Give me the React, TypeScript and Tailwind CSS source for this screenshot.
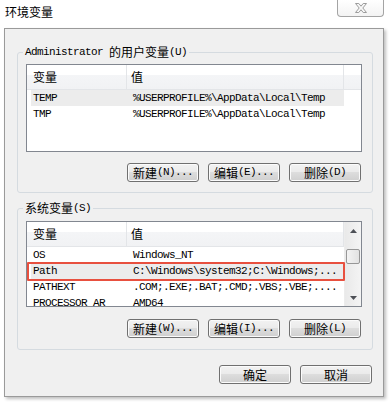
import React from "react";

const mono = "font-['Liberation_Mono'] text-[11px] tracking-[-0.6px] whitespace-pre";

function Btn({ children }: { children: React.ReactNode }) {
  return (
    <div className="w-[72px] h-[19px] rounded-[3px] border border-[#707070] bg-[linear-gradient(#f2f2f2_0%,#ebebeb_45%,#dddddd_50%,#cfcfcf_100%)] shadow-[inset_0_0_0_1px_#fbfbfb] flex items-center justify-center text-[12px] leading-none text-black">
      {children}
    </div>
  );
}

function Label({ cn, key1, tail = "..." }: { cn: string; key1: string; tail?: string }) {
  return (
    <span className="flex items-center">
      <span>{cn}</span>
      <span className={mono}>
        ({key1}){tail}
      </span>
    </span>
  );
}

function Header({ full }: { full: boolean }) {
  return (
    <div className="flex h-[25px] border-b border-[#e3e5e8] bg-[linear-gradient(#ffffff_0%,#ffffff_42%,#f4f5f7_42%,#f1f2f4_100%)]">
      <div className="w-[100px] border-r border-[#e3e5e8] pl-[6px] flex items-center text-[12px]">变量</div>
      <div className={full ? "w-[217px] border-r border-[#e3e5e8] pl-[4px] flex items-center text-[12px]" : "w-[217px] pl-[4px] flex items-center text-[12px]"}>
        值
      </div>
    </div>
  );
}

function Row({ name, value, selected, marked }: { name: string; value: string; selected?: boolean; marked?: boolean }) {
  return (
    <div className={selected ? "relative flex h-[16px] items-center ml-[4px] w-[313px] bg-[#ececec]" : "relative flex h-[16px] items-center ml-[4px] w-[313px]"}>
      <div className={`w-[96px] pl-[2px] ${mono}`}>{name}</div>
      <div className={`pl-[6px] ${mono}`}>{value}</div>
      {marked && (
        <div className="absolute -left-[4px] -right-[1px] -top-[1px] -bottom-[2px] border-2 border-[#e8503f] rounded-[1px]" />
      )}
    </div>
  );
}

function Arrow({ up }: { up: boolean }) {
  return (
    <svg width="7" height="4" viewBox="0 0 7 4">
      <polygon points={up ? "0,4 7,4 3.5,0" : "0,0 7,0 3.5,4"} fill="#4d5056" />
    </svg>
  );
}

export default function App() {
  return (
    <div className="w-[392px] h-[405px] bg-white overflow-hidden text-black font-['Noto_Sans_CJK_SC',sans-serif] text-[12px]">
      <div className="flex h-[28px] justify-between">
        <div className="pl-[5px] pt-[5px] leading-[14px] text-[12px]">环境变量</div>
        <div className="mr-[8px] w-[47px] h-[17px] border border-t-0 border-[#a4a4a4] rounded-b-[4px] bg-[linear-gradient(#ffffff,#f3f3f3)] flex items-center justify-center">
          <svg width="12" height="10" viewBox="0 0 12 10">
            <polygon
              points="0.5,0.5 3.8,0.5 6,3.2 8.2,0.5 11.5,0.5 7.8,5 11.5,9.5 8.2,9.5 6,6.8 3.8,9.5 0.5,9.5 4.2,5"
              fill="#f7f7f7"
              stroke="#9c9c9c"
              strokeWidth="1"
            />
          </svg>
        </div>
      </div>

      <div className="ml-[4px] w-[380px] h-[369px] border border-[#9a9a9a] bg-[#f0f0f0] shadow-[2px_2px_3px_rgba(0,0,0,0.25)]">
        <fieldset className="mt-[16px] ml-[12px] w-[356px] border border-[#d5dbe0] rounded-[3px] pb-[10px]">
          <legend className="ml-[5px] px-[2px] leading-[14px] flex items-center">
            <span className={mono}>Administrator </span>
            <span>的用户变量</span>
            <span className={mono}>(U)</span>
          </legend>
          <div className="mt-[5px] ml-[8px] w-[336px] h-[88px] border border-[#828790] bg-white overflow-hidden">
            <div className="flex h-[25px] border-b border-[#e3e5e8] bg-[linear-gradient(#ffffff_0%,#ffffff_42%,#f4f5f7_42%,#f1f2f4_100%)]">
              <div className="w-[100px] border-r border-[#e3e5e8] pl-[6px] flex items-center">变量</div>
              <div className="w-[217px] border-r border-[#e3e5e8] pl-[4px] flex items-center">值</div>
            </div>
            <Row name="TEMP" value="%USERPROFILE%\AppData\Local\Temp" selected />
            <Row name="TMP" value="%USERPROFILE%\AppData\Local\Temp" />
          </div>
          <div className="mt-[11px] flex justify-end gap-[9px] pr-[11px]">
            <Btn><Label cn="新建" key1="N" /></Btn>
            <Btn><Label cn="编辑" key1="E" /></Btn>
            <Btn><Label cn="删除" key1="D" tail="" /></Btn>
          </div>
        </fieldset>

        <fieldset className="mt-[8px] ml-[12px] w-[356px] border border-[#d5dbe0] rounded-[3px] pb-[11px]">
          <legend className="ml-[5px] px-[2px] leading-[14px] flex items-center">
            <span>系统变量</span>
            <span className={mono}>(S)</span>
          </legend>
          <div className="mt-[6px] ml-[8px] w-[336px] h-[86px] border border-[#828790] bg-white overflow-hidden flex">
            <div className="w-[317px]">
              <Header full />
              <Row name="OS" value="Windows_NT" />
              <Row name="Path" value="C:\Windows\system32;C:\Windows;..." selected marked />
              <Row name="PATHEXT" value=".COM;.EXE;.BAT;.CMD;.VBS;.VBE;...." />
              <Row name="PROCESSOR_AR" value="AMD64" />
            </div>
            <div className="w-[17px] flex flex-col bg-[linear-gradient(90deg,#e9e9e9,#f4f4f4)] border-l border-[#ececec]">
              <div className="h-[17px] flex items-center justify-center">
                <Arrow up />
              </div>
              <div className="mt-[10px] mx-auto w-[14px] h-[15px] rounded-[2px] border border-[#979797] bg-[linear-gradient(90deg,#f3f3f3,#e2e2e2)]" />
              <div className="flex-1" />
              <div className="h-[17px] flex items-center justify-center">
                <Arrow up={false} />
              </div>
            </div>
          </div>
          <div className="mt-[12px] flex justify-end gap-[9px] pr-[11px]">
            <Btn><Label cn="新建" key1="W" /></Btn>
            <Btn><Label cn="编辑" key1="I" /></Btn>
            <Btn><Label cn="删除" key1="L" tail="" /></Btn>
          </div>
        </fieldset>

        <div className="mt-[15px] flex justify-end gap-[9px] pr-[11px]">
          <Btn>确定</Btn>
          <Btn>取消</Btn>
        </div>
      </div>
    </div>
  );
}
